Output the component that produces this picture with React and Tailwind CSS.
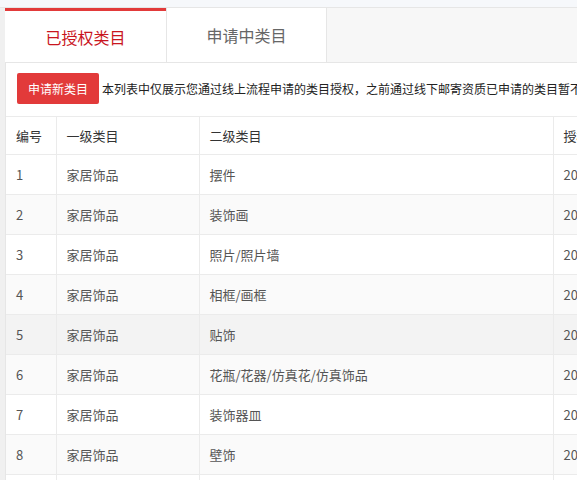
import React from "react";

const rows = [
    { id: 1, second: "摆件", bg: "bg-white" },
    { id: 2, second: "装饰画", bg: "bg-[#fafafa]" },
    { id: 3, second: "照片/照片墙", bg: "bg-white" },
    { id: 4, second: "相框/画框", bg: "bg-[#fafafa]" },
    { id: 5, second: "贴饰", bg: "bg-[#f3f3f3]" },
    { id: 6, second: "花瓶/花器/仿真花/仿真饰品", bg: "bg-[#fafafa]" },
    { id: 7, second: "装饰器皿", bg: "bg-white" },
    { id: 8, second: "壁饰", bg: "bg-[#fafafa]" },
    { id: 9, second: "挂钟", bg: "bg-white" },
];

const cell = "border-r border-b border-[#ebebeb] px-[10px] text-left align-middle whitespace-nowrap overflow-hidden";

export default function App() {
    return (
        <div
            className="w-[577px] h-[480px] overflow-hidden bg-[#f6f8fb] pt-[7px]"
            style={{ fontFamily: '"Noto Sans CJK SC", "Noto Sans", sans-serif' }}
        >
            <div className="border-t border-[#e6e6e6] bg-[#f0f0f0] pl-[5px] h-full">
                <div className="w-[1000px] h-full">
                    {/* tabs */}
                    <div className="flex h-[55px] bg-[#f7f7f7] border-b border-[#e6e6e6]">
                        <div className="w-[161px] bg-white border-t-[3px] border-[#e23a3a] flex items-center justify-center text-[16px] text-[#c9151e]">
                            已授权类目
                        </div>
                        <div className="w-[161px] bg-white border-l border-r border-[#e6e6e6] flex items-center justify-center text-[16px] text-[#666]">
                            申请中类目
                        </div>
                    </div>

                    {/* content */}
                    <div className="bg-white border-l border-[#e6e6e6] h-full">
                        <div className="flex items-center pl-[11px] pt-[10px] pb-[12px]">
                            <button className="h-[31px] w-[82px] rounded-[2px] bg-[#e23a3a] text-white text-[12px]">
                                申请新类目
                            </button>
                            <span className="ml-[3px] text-[12px] text-[#222] whitespace-nowrap">
                                本列表中仅展示您通过线上流程申请的类目授权，之前通过线下邮寄资质已申请的类目暂不展示，如需查看请联系客服
                            </span>
                        </div>

                        <table className="table-fixed border-collapse border-t border-[#ebebeb] text-[13px]">
                            <colgroup>
                                <col className="w-[50px]" />
                                <col className="w-[143px]" />
                                <col className="w-[354px]" />
                                <col className="w-[200px]" />
                            </colgroup>
                            <thead>
                                <tr className="h-[38px] bg-white text-[#333]">
                                    <th className={`${cell} font-normal`}>编号</th>
                                    <th className={`${cell} font-normal`}>一级类目</th>
                                    <th className={`${cell} font-normal`}>二级类目</th>
                                    <th className={`${cell} font-normal`}>授权时间</th>
                                </tr>
                            </thead>
                            <tbody>
                                {rows.map((r) => (
                                    <tr key={r.id} className={`h-[40px] text-[#555] ${r.bg}`}>
                                        <td className={cell}>{r.id}</td>
                                        <td className={cell}>家居饰品</td>
                                        <td className={cell}>{r.second}</td>
                                        <td className={cell}>2018-03-12</td>
                                    </tr>
                                ))}
                            </tbody>
                        </table>
                    </div>
                </div>
            </div>
        </div>
    );
}
